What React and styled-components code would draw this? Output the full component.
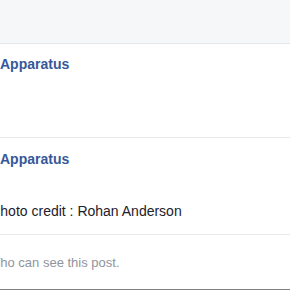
import React from "react";
import styled, { createGlobalStyle } from "styled-components";

const Global = createGlobalStyle`
  html, body { margin: 0; padding: 0; background: #fff; }
  body { font-family: "Liberation Sans", Arial, Helvetica, sans-serif; -webkit-font-smoothing: antialiased; }
  #root { width: 290px; height: 290px; overflow: hidden; }
`;

const Page = styled.div`
  width: 290px;
  height: 290px;
  display: flex;
  flex-direction: column;
  overflow: hidden;
  background: #fff;
`;

const TopBar = styled.div`
  height: 43px;
  flex: none;
  background: #f6f7f9;
  border-bottom: 1px solid #e5e6e9;
`;

const Section = styled.div`
  flex: none;
  height: ${(p) => p.$h}px;
  border-bottom: ${(p) => (p.$border ? "1px solid #e9eaed" : "none")};
  display: flex;
  flex-direction: column;
  box-sizing: border-box;
  padding-top: ${(p) => p.$pt}px;
`;

const Name = styled.div`
  font-size: 14px;
  font-weight: bold;
  color: #365899;
  line-height: 18px;
`;

const Caption = styled.div`
  font-size: 14px;
  color: #1d2129;
  line-height: 18px;
  margin-top: ${(p) => p.$mt}px;
  margin-left: -9px;
  white-space: nowrap;
`;

const Privacy = styled.div`
  font-size: 13px;
  color: #90949c;
  line-height: 16px;
  margin-left: -12px;
  white-space: nowrap;
`;

const Spacer = styled.div`
  flex: 1;
`;

const BottomRule = styled.div`
  flex: none;
  height: 1px;
  background: #7f8185;
`;

export default function App() {
  return (
    <>
      <Global />
      <Page>
        <TopBar />
        <Section $h={94} $pt={11} $border>
          <Name>Apparatus</Name>
        </Section>
        <Section $h={97} $pt={12} $border>
          <Name>Apparatus</Name>
          <Caption $mt={34}>Photo credit : Rohan Anderson</Caption>
        </Section>
        <Section $h={53} $pt={20}>
          <Privacy>Who can see this post.</Privacy>
        </Section>
        <Spacer />
        <BottomRule />
      </Page>
    </>
  );
}
